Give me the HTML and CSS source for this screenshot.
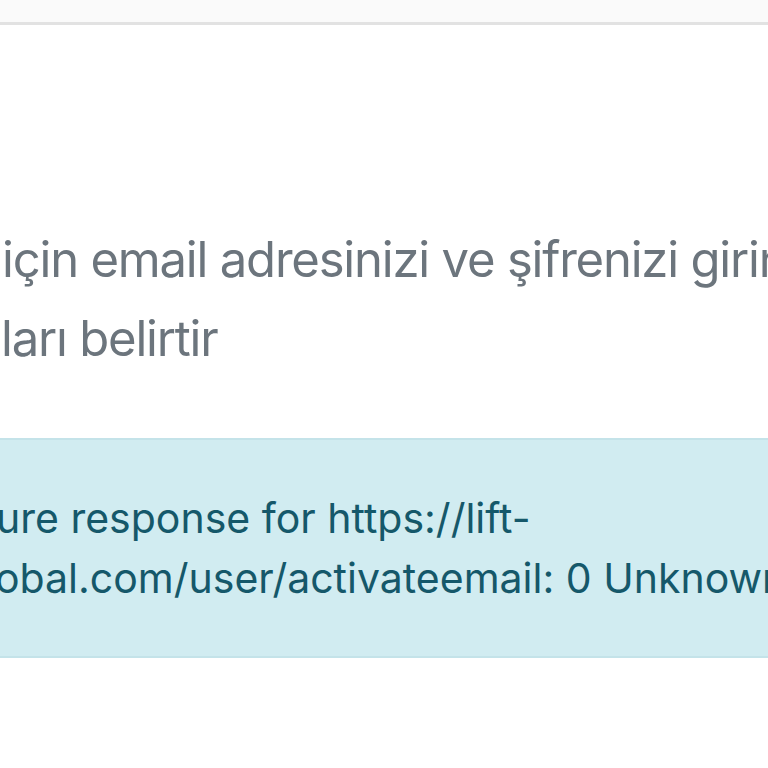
FILE: index.html
```html
<!DOCTYPE html>
<html lang="tr">
<head>
<meta charset="utf-8">
<title>Giriş</title>
<link rel="stylesheet" href="styles.css">
</head>
<body>
<header class="topbar"></header>
<main class="content">
  <p class="lead lead-first">için email adresinizi ve şifrenizi girin</p>
  <p class="lead lead-second">ları belirtir</p>
  <div class="alert">
    <div class="alert-line alert-line-1">ure response for https://lift-</div>
    <div class="alert-line alert-line-2">obal.com/user/activateemail: 0 Unknown Error</div>
  </div>
</main>
</body>
</html>
```
FILE: styles.css
```css
html, body {
  margin: 0;
  padding: 0;
  background: #ffffff;
  overflow: hidden;
}
body {
  width: 768px;
  height: 768px;
  font-family: Inter, "Noto Sans", "DejaVu Sans", sans-serif;
}
.topbar {
  height: 22px;
  background: #fafafa;
  border-bottom: 3px solid #e2e2e2;
}
.content {
  padding-top: 195px;
}
.lead {
  margin: 0;
  font-size: 49px;
  line-height: 79px;
  letter-spacing: -1.2px;
  color: #6c757d;
  white-space: nowrap;
}
.lead-first {
  padding-left: 2px;
}
.lead-second {
  padding-left: 1px;
}
.alert {
  margin-top: 60px;
  background: #d1ecf1;
  border-top: 2px solid #c4e3e9;
  border-bottom: 2px solid #c4e3e9;
  padding: 48px 0;
  color: #15586a;
  font-size: 41px;
  line-height: 60px;
  white-space: nowrap;
}
.alert-line-1 {
  margin-left: -4px;
}
.alert-line-2 {
  margin-left: -5px;
}
```
